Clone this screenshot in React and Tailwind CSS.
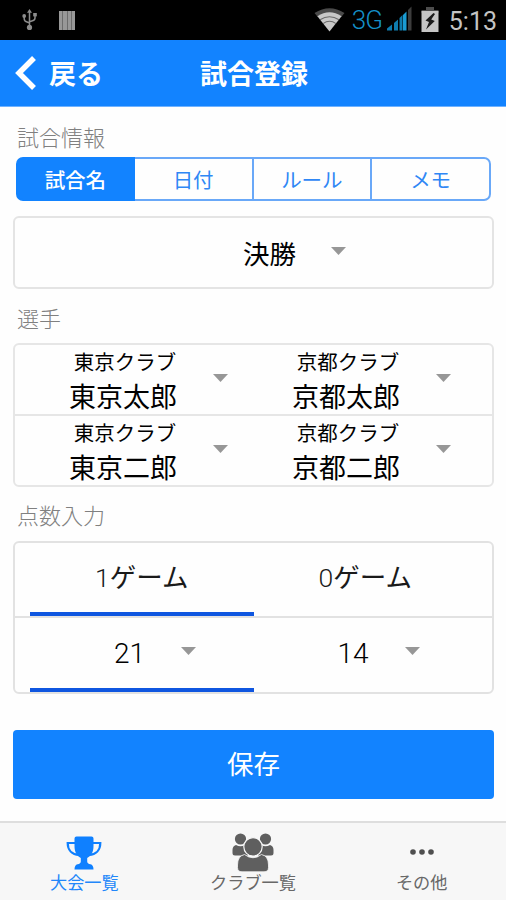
import React, { useState } from 'react';

const Caret = () => (
  <svg width="15" height="8" viewBox="0 0 15 8" className="shrink-0">
    <path d="M0 0H15L7.5 8Z" fill="#979797" />
  </svg>
);

const UsbIcon = () => (
  <svg width="16" height="22" viewBox="0 0 16 22" fill="none" stroke="#8c8c8c" strokeWidth="1.5">
    <path d="M7.5 3V18M2.2 7.5V9.5Q2.2 12 4.5 12.8L7.5 14M13 6V9Q13 11 10.5 11.8L7.5 12.8" />
    <path d="M7.5 0L10 3.8H5Z" fill="#8c8c8c" stroke="none" />
    <rect x="11.2" y="4" width="3.6" height="3.4" fill="#8c8c8c" stroke="none" />
    <circle cx="2.2" cy="7" r="1.9" fill="#8c8c8c" stroke="none" />
    <circle cx="7.5" cy="18.4" r="2.6" fill="#8c8c8c" stroke="none" />
  </svg>
);

const WifiIcon = () => (
  <svg width="31" height="24" viewBox="0 0 31 24">
    <path d="M0.5 5Q15.5 -4.5 30.5 5L27.2 9Q15.5 1.8 3.8 9Z" fill="#4a4a4a" />
    <path d="M3.4 8.2Q15.5 0.4 27.6 8.2L15.5 23.5Z" fill="#c8c8c8" />
    <g fill="none" stroke="#6a6a6a" strokeWidth="1.1">
      <path d="M6 11.8Q15.5 5.6 25 11.8" />
      <path d="M9 15.6Q15.5 11 22 15.6" />
    </g>
  </svg>
);

const SignalIcon = () => (
  <svg width="25" height="25" viewBox="0 0 25 25">
    <path d="M0 24.5V22.5L5 18.5V24.5Z" fill="#0e7cae" />
    <path d="M7 24.5V17L11 13.5V24.5Z" fill="#0e7cae" />
    <path d="M12.5 24.5V12L15.5 9V24.5Z" fill="#0e7cae" />
    <path d="M16 24.5V9L19.5 5.5V24.5Z" fill="#1a9bd2" />
    <path d="M21 24.5V4L24.5 0.5V24.5Z" fill="#3c3c3c" />
  </svg>
);

const BatteryIcon = () => (
  <svg width="18" height="25" viewBox="0 0 18 25">
    <path d="M5 0H13V3H17.5V6H0.5V3H5Z" fill="#4d4d4d" />
    <rect x="0.5" y="4" width="17" height="21" fill="#c6c6c6" />
    <path d="M12.5 6L4.5 13.5L8 15L5 22.5L13.8 14L10.2 12.5L14 7Z" fill="#1c1c1c" />
  </svg>
);

const TrophyIcon = () => (
  <svg width="36" height="34" viewBox="0 0 36 34">
    <path d="M8.5 2.5Q8.5 0.5 10.5 0.5H25.5Q27.5 0.5 27.5 2.5V10C27.5 16 25.5 19.5 21.2 22V25.5Q21.2 27.8 24.5 28.3Q27.5 29 27.5 33.5H8.5Q8.5 29 11.5 28.3Q14.8 27.8 14.8 25.5V22C10.5 19.5 8.5 16 8.5 10Z" fill="#0f80ff" />
    <path d="M9 7H1.7C1.7 14 6 18.6 13 18.8M27 7H34.3C34.3 14 30 18.6 23 18.8" fill="none" stroke="#0f80ff" strokeWidth="2.2" />
  </svg>
);

const ClubIcon = () => (
  <svg width="42" height="39" viewBox="0 0 42 39" fill="#5f5f5f">
    <circle cx="8.5" cy="6" r="5.6" />
    <circle cx="33.5" cy="6" r="5.6" />
    <path d="M4 12Q8.5 14.5 13 12L16 15V22.5H3Q0.5 22.5 0.5 20V17Q0.5 13 4 12Z" />
    <path d="M38 12Q33.5 14.5 29 12L26 15V22.5H39Q41.5 22.5 41.5 20V17Q41.5 13 38 12Z" />
    <path d="M12.5 21.5Q21 28 29.5 21.5Q36.5 23 36.5 32V34.5Q36.5 38.8 32 38.8H10Q5.5 38.8 5.5 34.5V32Q5.5 23 12.5 21.5Z" stroke="#f7f7f7" strokeWidth="0.8" />
    <circle cx="21" cy="13.8" r="9.2" stroke="#f7f7f7" strokeWidth="1.2" />
  </svg>
);

const DotsIcon = () => (
  <svg width="24" height="6" viewBox="0 0 24 6" fill="#4f4f4f">
    <circle cx="3" cy="3" r="2.8" />
    <circle cx="12" cy="3" r="2.8" />
    <circle cx="21" cy="3" r="2.8" />
  </svg>
);

const SectionLabel = ({ children }) => (
  <h2 className="pl-1 text-[22px] leading-[28px] font-light text-[#808080]">{children}</h2>
);

// Club on the first line, player on the second
const PlayerSelect = ({ club, name }) => (
  <button className="flex h-[66px] items-center pl-[39px]">
    <span className="flex w-[108px] flex-col items-center whitespace-nowrap text-black">
      <span className="pt-[2px] pl-[4px] text-[20.5px] leading-[33px]">{club}</span>
      <span className="text-[27px] leading-[35px]">{name}</span>
    </span>
    <span className="ml-[36px]"><Caret /></span>
  </button>
);

const ScoreSelect = ({ value }) => (
  <button className="flex h-full items-center pl-[84px] font-light text-black">
    <span className="w-[30px] pt-[2px] text-center text-[28px]">{value}</span>
    <span className="mb-[4px] ml-[37px]"><Caret /></span>
  </button>
);

const App = () => {
  const tabs = ['試合名', '日付', 'ルール', 'メモ'];
  const players = [
    [{ club: '東京クラブ', name: '東京太郎' }, { club: '京都クラブ', name: '京都太郎' }],
    [{ club: '東京クラブ', name: '東京二郎' }, { club: '京都クラブ', name: '京都二郎' }],
  ];
  const [activeTab, setActiveTab] = useState(0);

  return (
    <div className="flex h-[900px] w-[506px] flex-col overflow-hidden bg-[#fefefe] font-['Noto_Sans_CJK_JP',sans-serif]">

      {/* --- STATUS BAR --- */}
      <div className="flex h-10 shrink-0 items-center bg-black pr-[9px] pl-[22px] font-[Roboto,sans-serif]">
        <UsbIcon />
        <div className="ml-[21px] flex h-[19px] w-4 gap-px bg-[#6c6c6c]">
          <div className="flex-1 bg-[#989898]" />
          <div className="flex-1 bg-[#989898]" />
          <div className="flex-1 bg-[#989898]" />
          <div className="flex-1 bg-[#989898]" />
        </div>
        <div className="ml-auto flex items-center">
          <WifiIcon />
          <span className="ml-[7px] w-[31px] text-[26px] leading-[38px] font-light tracking-[-1px] text-[#1490c8]">3G</span>
          <span className="mb-[3px] ml-[4px]"><SignalIcon /></span>
          <span className="mb-[1px] ml-[9px]"><BatteryIcon /></span>
          <span className="ml-[10px] pt-[3px] text-[25px] leading-[38px] text-[#c4c4c4]">5:13</span>
        </div>
      </div>

      {/* --- HEADER --- */}
      <header className="grid h-[67px] shrink-0 grid-cols-3 items-center border-b border-[#6fb2ff] bg-[#1283ff] text-[27px] font-bold text-white">
        <button className="flex items-center pl-[15px]">
          <svg width="22" height="36" viewBox="0 0 22 36" fill="none" stroke="#fff" strokeWidth="5.5">
            <path d="M19 3L4 18L19 33" />
          </svg>
          <span className="ml-[12px] leading-[40px]">戻る</span>
        </button>
        <h1 className="pl-[2px] text-center leading-[40px] whitespace-nowrap">試合登録</h1>
      </header>

      <main className="flex flex-1 flex-col pt-[15px] pr-[12px] pl-[13px]">
        {/* --- MATCH INFO --- */}
        <SectionLabel>試合情報</SectionLabel>
        <div className="mx-[3px] mt-[7px] grid h-[44px] grid-cols-4">
          {tabs.map((tab, idx) => (
            <button
              key={tab}
              onClick={() => setActiveTab(idx)}
              className={`border-y-2 border-r-2 text-[20.5px] leading-[40px] first:rounded-l-[7px] first:border-l-2 last:rounded-r-[7px] ${
                idx === activeTab ? 'border-[#1283ff] bg-[#1283ff] font-medium text-white' : 'border-[#69a8f8] text-[#2f87f5]'
              }`}
            >
              {tab}
            </button>
          ))}
        </div>
        <button className="mt-[15px] flex h-[73px] items-center rounded-md border-2 border-[#e4e4e4] pl-[228px] text-[26.5px] text-black">
          <span className="pt-px">決勝</span>
          <span className="mb-[3px] ml-[35px]"><Caret /></span>
        </button>

        {/* --- PLAYERS --- */}
        <div className="mt-[14px]"><SectionLabel>選手</SectionLabel></div>
        <div className="mt-[12px] h-[144px] divide-y-2 divide-[#e6e6e6] rounded-md border-2 border-[#e6e6e6]">
          {players.map((row, idx) => (
            <div key={idx} className="grid h-[71px] grid-cols-[223px_223px] px-[15px]">
              {row.map((player) => (
                <PlayerSelect key={player.name} club={player.club} name={player.name} />
              ))}
            </div>
          ))}
        </div>

        {/* --- SCORE --- */}
        <div className="mt-[13px]"><SectionLabel>点数入力</SectionLabel></div>
        <div className="mt-[13px] h-[153px] rounded-md border-2 border-[#e2e2e2] font-[Roboto,'Noto_Sans_CJK_JP',sans-serif] text-[26.5px] text-[#1a1a1a]">
          <div className="grid h-[75px] grid-cols-2 border-b-2 border-[#e2e2e2] px-[15px]">
            <div className="flex items-center justify-center border-b-4 border-[#0f56e0]"><span className="font-light">1</span>ゲーム</div>
            <div className="flex items-center justify-center border-b-4 border-transparent"><span className="font-light">0</span>ゲーム</div>
          </div>
          <div className="grid h-[74px] grid-cols-2 px-[15px]">
            <div className="border-b-4 border-[#0f56e0]"><ScoreSelect value="21" /></div>
            <div className="border-b-4 border-transparent"><ScoreSelect value="14" /></div>
          </div>
        </div>

        <button className="mt-[36px] h-[69px] rounded bg-[#1283ff] pb-[3px] text-[26.5px] text-white">保存</button>
      </main>

      {/* --- TAB BAR --- */}
      <nav className="grid h-[79px] shrink-0 grid-cols-3 border-t-2 border-[#dedede] bg-[#f7f7f7] text-[17.2px] leading-[24px] text-[#686868]">
        <button className="flex flex-col items-center text-[#2287fa]">
          <span className="flex h-[47px] items-end"><TrophyIcon /></span>
          <span>大会一覧</span>
        </button>
        <button className="flex flex-col items-center">
          <span className="flex h-[47px] items-end"><span className="-mb-[2px]"><ClubIcon /></span></span>
          <span>クラブ一覧</span>
        </button>
        <button className="flex flex-col items-center">
          <span className="flex h-[47px] items-end pb-[15px]"><DotsIcon /></span>
          <span>その他</span>
        </button>
      </nav>
    </div>
  );
};

export default App;
